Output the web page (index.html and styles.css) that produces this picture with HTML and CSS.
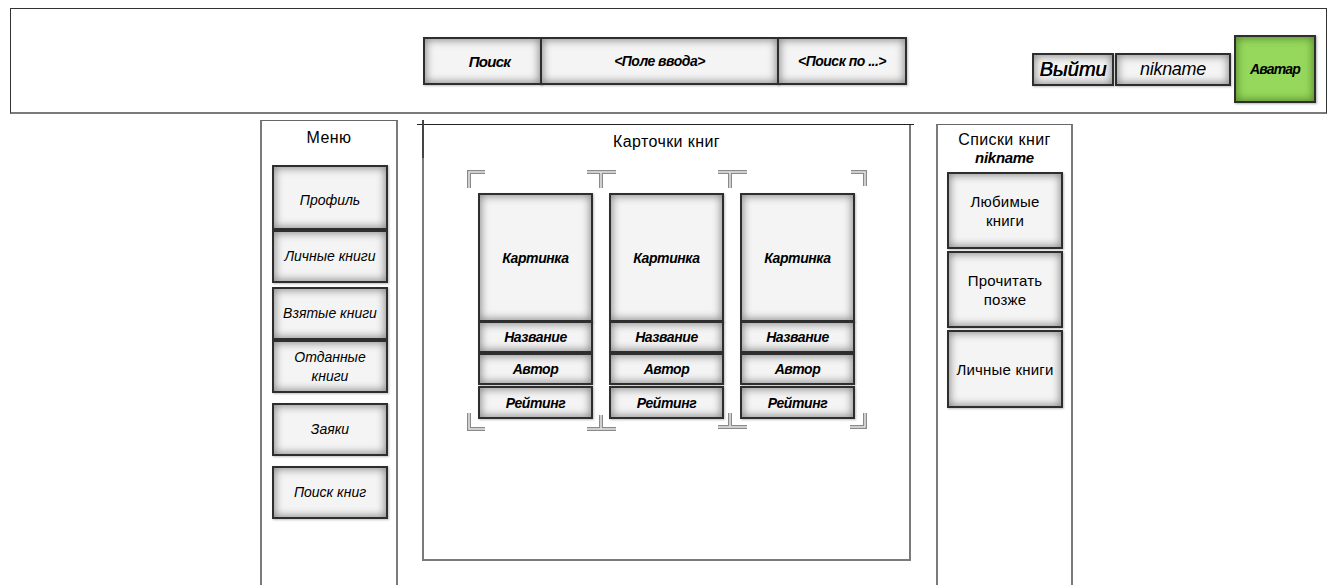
FILE: index.html
```html
<!DOCTYPE html>
<html lang="ru">
<head>
    <meta charset="UTF-8">
    <meta name="viewport" content="width=device-width, initial-scale=1.0">
    <title>Книги — макет</title>
    <link rel="stylesheet" href="styles.css">
</head>
<body>
    <header class="topbar">
        <div class="search">
            <div class="box search-label">Поиск</div>
            <div class="box search-field">&lt;Поле ввода&gt;</div>
            <div class="box search-mode">&lt;Поиск по ...&gt;</div>
        </div>
        <div class="user">
            <div class="box logout">Выйти</div>
            <div class="box nick">nikname</div>
        </div>
        <div class="box avatar">Аватар</div>
    </header>

    <main class="layout">
        <aside class="menu">
            <div class="panel-title">Меню</div>
            <div class="menu-list">
                <div class="box item item-tall">Профиль</div>
                <div class="box item">Личные книги</div>
                <div class="box item gap-s">Взятые книги</div>
                <div class="box item">Отданные<br>книги</div>
                <div class="box item gap-l">Заяки</div>
                <div class="box item gap-l">Поиск книг</div>
            </div>
        </aside>

        <section class="books">
            <div class="panel-title">Карточки книг</div>
            <div class="cards-wrap">
                <div class="card">
                    <div class="box card-pic">Картинка</div>
                    <div class="box card-row row-name">Название</div>
                    <div class="box card-row">Автор</div>
                    <div class="box card-row row-rate">Рейтинг</div>
                </div>
                <div class="card">
                    <div class="box card-pic">Картинка</div>
                    <div class="box card-row row-name">Название</div>
                    <div class="box card-row">Автор</div>
                    <div class="box card-row row-rate">Рейтинг</div>
                </div>
                <div class="card">
                    <div class="box card-pic">Картинка</div>
                    <div class="box card-row row-name">Название</div>
                    <div class="box card-row">Автор</div>
                    <div class="box card-row row-rate">Рейтинг</div>
                </div>

                <!-- selection handles -->
                <svg class="handles" width="400" height="262" viewBox="0 0 400 262">
                    <g class="handle-outer">
                        <path d="M2 18 V2 H18"/>
                        <path d="M120 2 H149 M134 2 V18"/>
                        <path d="M251 2 H280 M263 2 V18"/>
                        <path d="M384 2 H398 V16"/>
                        <path d="M2 243 V259 H18"/>
                        <path d="M120 259 H149 M134 245 V259"/>
                        <path d="M251 257 H280 M263 243 V257"/>
                        <path d="M383 257 H398 V243"/>
                    </g>
                    <g class="handle-inner">
                        <path d="M2 18 V2 H18"/>
                        <path d="M120 2 H149 M134 2 V18"/>
                        <path d="M251 2 H280 M263 2 V18"/>
                        <path d="M384 2 H398 V16"/>
                        <path d="M2 243 V259 H18"/>
                        <path d="M120 259 H149 M134 245 V259"/>
                        <path d="M251 257 H280 M263 243 V257"/>
                        <path d="M383 257 H398 V243"/>
                    </g>
                </svg>
            </div>
        </section>

        <aside class="lists">
            <div class="panel-title lists-title">Списки книг<br><b class="lists-nick">nikname</b></div>
            <div class="lists-items">
                <div class="box list-item">Любимые<br>книги</div>
                <div class="box list-item">Прочитать<br>позже</div>
                <div class="box list-item list-last">Личные книги</div>
            </div>
        </aside>
    </main>
</body>
</html>
```

FILE: styles.css
```css
body {
    margin: 0;
    font-family: "Liberation Sans", Arial, sans-serif;
    background: #fff;
    color: #000;
    overflow: hidden;
}

/* generic mockup widget */
.box {
    box-sizing: border-box;
    display: flex;
    align-items: center;
    justify-content: center;
    text-align: center;
    background: #f4f4f4;
    border: 2px solid #2e2e2e;
    box-shadow: inset 0 0 8px 1px rgba(0, 0, 0, 0.45), 1px 1px 2px rgba(0, 0, 0, 0.25);
}

/* header */
.topbar {
    display: flex;
    align-items: flex-start;
    height: 103px;
    margin: 8px 11px 0 10px;
    border: 1px solid #333;
    border-bottom: 2px solid #7a7a7a;
}

.search {
    display: flex;
    height: 48px;
    margin: 28px 0 0 412px;
}

.search .box {
    font-style: italic;
    font-weight: bold;
}

.search-label {
    width: 119px;
    padding-left: 14px;
    font-size: 15px;
    letter-spacing: -0.7px;
}

.search-field {
    width: 239px;
    margin-left: -2px;
    font-size: 14px;
    letter-spacing: -0.5px;
}

.search-mode {
    width: 130px;
    margin-left: -2px;
    font-size: 14px;
    letter-spacing: -0.5px;
}

.user {
    display: flex;
    gap: 1px;
    height: 33px;
    margin: 44px 0 0 125px;
}

.logout {
    width: 82px;
    font-size: 20px;
    font-style: italic;
    text-shadow: 0.5px 0 0 #000;
}

.nick {
    width: 116px;
    font-size: 18px;
    font-style: italic;
    letter-spacing: -0.3px;
}

.avatar {
    width: 82px;
    height: 68px;
    margin: 26px 0 0 3px;
    background: #96d85c;
    box-shadow: inset 0 0 9px 1px rgba(30, 70, 0, 0.55), 1px 1px 2px rgba(0, 0, 0, 0.3);
    font-size: 14px;
    font-weight: bold;
    font-style: italic;
    letter-spacing: -0.8px;
}

/* main columns */
.layout {
    display: flex;
    align-items: flex-start;
    padding-left: 260px;
}

.panel-title {
    font-size: 16px;
    line-height: 16px;
    letter-spacing: 0.4px;
    text-align: center;
    padding-top: 9px;
}

.menu {
    box-sizing: border-box;
    width: 138px;
    height: 480px;
    margin-top: 6px;
    border: 2px solid #7a7a7a;
    border-top: 1px solid #666;
}

.menu-list {
    display: flex;
    flex-direction: column;
    margin: 19px 0 0 10px;
}

.item {
    width: 116px;
    height: 53px;
    font-size: 14px;
    font-style: italic;
    line-height: 19px;
}

.item-tall {
    height: 65px;
    padding-top: 5px;
}

.gap-s {
    margin-top: 4px;
}

.gap-l {
    margin-top: 10px;
}

.books {
    position: relative;
    box-sizing: border-box;
    width: 489px;
    height: 437px;
    margin: 10px 0 0 24px;
    border: 2px solid #7a7a7a;
    border-top: 1px solid #222;
}

.books::before {
    content: "";
    position: absolute;
    top: -1px;
    left: -7px;
    right: -5px;
    height: 1px;
    background: #222;
}

.books::after {
    content: "";
    position: absolute;
    top: -5px;
    left: -2px;
    width: 2px;
    height: 38px;
    background: #444;
}

.cards-wrap {
    position: relative;
    display: flex;
    gap: 16px;
    width: 400px;
    box-sizing: border-box;
    margin: 20px 0 0 43px;
    padding: 23px 0 13px 11px;
}

.card {
    display: flex;
    flex-direction: column;
    width: 115px;
}

.card .box {
    font-size: 14px;
    font-weight: bold;
    font-style: italic;
    letter-spacing: -0.4px;
}

.card-pic {
    height: 129px;
}

.card-row {
    height: 32px;
}

.row-name {
    margin-top: -1px;
}

.row-rate {
    height: 33px;
    margin-top: 1px;
}

.handles {
    position: absolute;
    top: 0;
    left: 0;
    fill: none;
}

.handle-outer {
    stroke: #8a8a8a;
    stroke-width: 4;
}

.handle-inner {
    stroke: #e6e6e6;
    stroke-width: 1.5;
}

.lists {
    box-sizing: border-box;
    width: 137px;
    height: 470px;
    margin: 10px 0 0 25px;
    border: 2px solid #7a7a7a;
    border-top: 1px solid #666;
}

.lists-title {
    line-height: 18px;
    padding-top: 6px;
}

.lists-nick {
    font-size: 15px;
    font-style: italic;
    letter-spacing: -0.3px;
}

.lists-items {
    display: flex;
    flex-direction: column;
    gap: 2px;
    margin: 5px 0 0 9px;
}

.list-item {
    width: 116px;
    height: 77px;
    font-size: 15px;
    line-height: 19px;
    letter-spacing: 0.2px;
}

.list-last {
    height: 78px;
}
```
